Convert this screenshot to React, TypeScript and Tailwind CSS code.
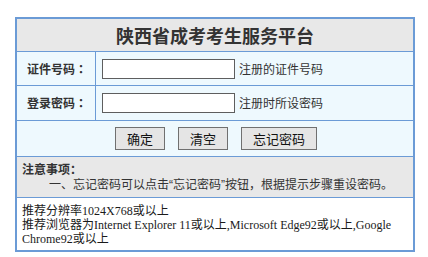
import React from 'react';

const SANS = "font-['Microsoft_YaHei','Noto_Sans_CJK_SC',sans-serif]";

export default function App() {
  return (
    <div className={`w-[428px] h-[257px] bg-white pt-[17px] pl-[15px] ${SANS}`}>
      <div className="w-[400px] border-2 border-[#6b9bd6] text-[#333]">
        {/* title */}
        <div className="h-[33px] bg-[#e8e8e8] border-b border-[#6b9bd6] flex items-center justify-center">
          <h1 className="text-[18px] font-bold leading-none text-[#333]">陕西省成考考生服务平台</h1>
        </div>

        {/* form rows */}
        {[
          { label: '证件号码', hint: '注册的证件号码', type: 'text', h: 'h-[34px]' },
          { label: '登录密码', hint: '注册时所设密码', type: 'password', h: 'h-[35px]' },
        ].map((r) => (
          <div key={r.label} className={`${r.h} flex bg-[#eef9fe] border-b border-[#6b9bd6]`}>
            <div className="w-[79px] border-r border-[#6b9bd6] flex items-center justify-center pl-[2px] text-[12px] font-bold">
              {r.label}
              <span className="font-['Noto_Sans_CJK_TC',sans-serif]">：</span>
            </div>
            <div className="flex-1 flex items-center pl-[6px]">
              <input
                type={r.type}
                className="w-[133px] h-[20px] bg-white border border-[#5e5e5e] outline-none"
              />
              <span className="ml-[4px] text-[12px] leading-none">{r.hint}</span>
            </div>
          </div>
        ))}

        {/* buttons */}
        <div className="h-[36px] bg-[#eef9fe] border-b border-[#6b9bd6] flex items-center justify-center gap-[13px] pl-[2px]">
          {['确定', '清空', '忘记密码'].map((b) => (
            <button
              key={b}
              className="h-[23px] px-[11px] bg-[#e5e5e5] border border-[#707070] text-[13px] leading-none text-[#111]"
            >
              {b}
            </button>
          ))}
        </div>

        {/* notice */}
        <div className="h-[41px] bg-[#e8e8e8] border-b border-[#6b9bd6] px-[5px] pt-[6px] text-[12px] leading-[15px] font-['Liberation_Sans','Microsoft_YaHei','Noto_Sans_CJK_SC',sans-serif]">
          <div className="font-bold">注意事项：</div>
          <div className="pl-[27px] whitespace-nowrap">一、忘记密码可以点击“忘记密码”按钮，根据提示步骤重设密码。</div>
        </div>

        {/* footer */}
        <div className="h-[52px] bg-white px-[5px] pt-[6px] text-[12px] leading-[14px] text-[#1a1a1a] font-['Times_New_Roman','Liberation_Serif','Microsoft_YaHei','Noto_Sans_CJK_SC',serif]">
          <div>推荐分辨率1024X768或以上</div>
          <div>推荐浏览器为Internet Explorer 11或以上,Microsoft Edge92或以上,Google Chrome92或以上</div>
        </div>
      </div>
    </div>
  );
}
